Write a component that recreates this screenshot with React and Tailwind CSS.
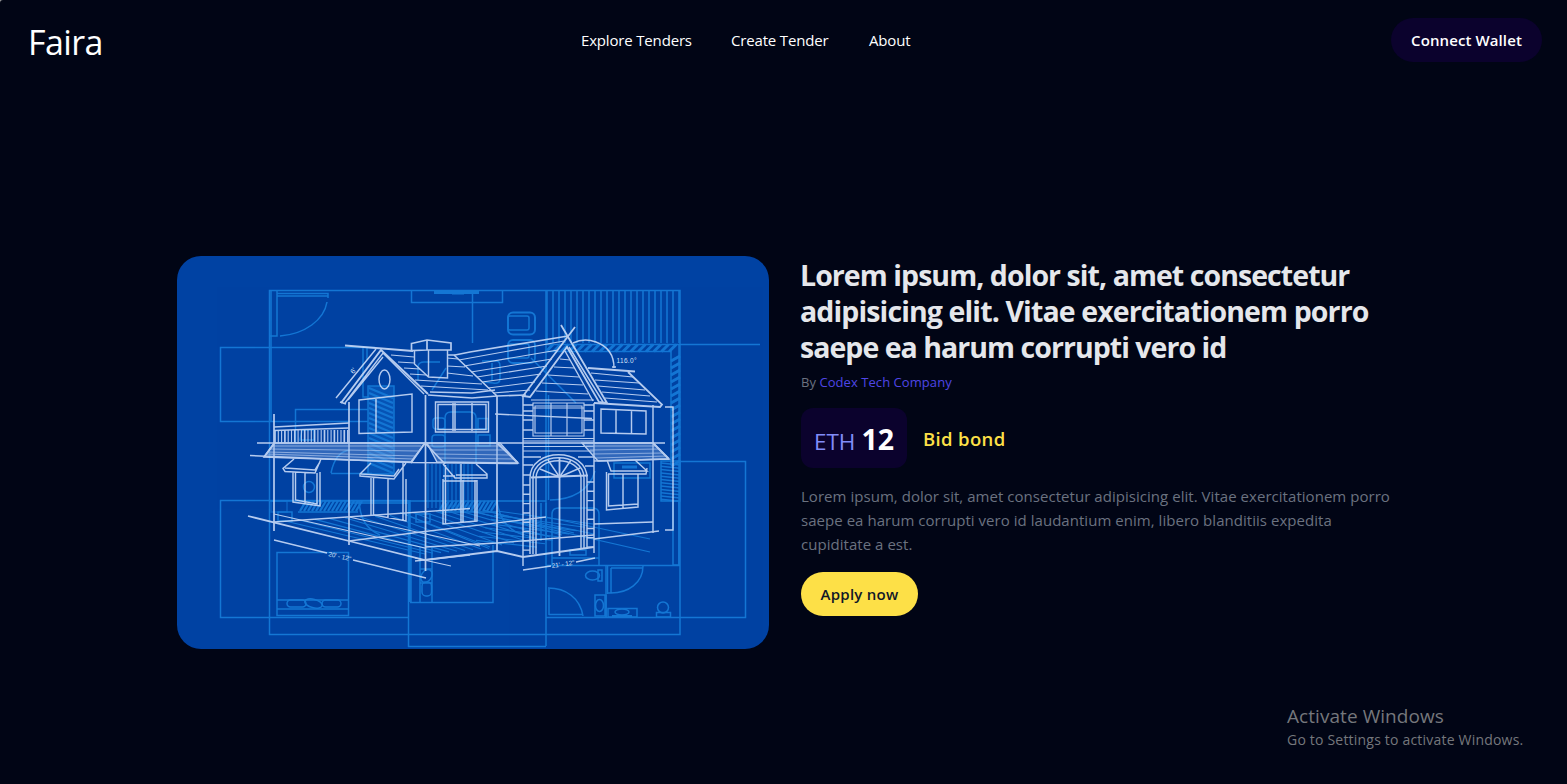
const range = (n) => Array.from({ length: n }, (_, i) => i);

const NAV = [
  { label: 'Explore Tenders', width: 'w-[110px]' },
  { label: 'Create Tender', width: 'w-[98px]' },
  { label: 'About', width: 'w-[44px]' },
];

function FloorPlan() {
  return (
    <g stroke="#1e90ec" strokeWidth="1.5" opacity="0.68">
      {/* outer walls */}
      <path d="M269.5 634.5V290.5H680V634.5Z" />
      <path d="M271 290V421M679 344V565" />
      <path d="M368 421.500H220.500V347.500H375" />
      <path d="M408 500.500H220.500V617.500H408" />
      <path d="M680 461.500H745.500V617.500H546M680 344.500H760" />
      <path d="M408.500 500V646.500H546M546 290V646M410 500V602M548.500 395V500" />
      <path d="M472.500 290V343M411.500 290.500V302.500H502.500V290.500" />
      <path d="M434 292.500H479" strokeWidth="3" />
      <path d="M452 292.500H464" strokeWidth="4" />
      {/* upper left door */}
      <path d="M277 290V336H270M277 293.500H328V298M277 296H328M327 302C324 320 305 334 280 336" />
      <path d="M368 409.500H295.500V443M302 430H314V440H300ZM363 347V397H368M367 347V360" />
      {/* chairs */}
      <rect x="508" y="312.500" width="27" height="22" rx="5" strokeWidth="2" />
      <rect x="508" y="316" width="21" height="14" rx="2" />
      <rect x="508" y="340" width="27" height="23" rx="5" strokeWidth="1.800" />
      <rect x="508" y="344" width="21" height="14" rx="2" />
      <path d="M482 361H496Q500 361 500 366V379Q500 384 493 383L484 382M492 363V381M418 380V366Q419 362 424 362H440M432 390L446 368M531 358L576 403" />
      <rect x="433" y="418" width="12" height="11" rx="3" />
      <rect x="432" y="435" width="13" height="12" rx="3" />
      <path d="M445 463V418Q445 412 451 412H470Q476 412 476 418V463M478 418.500H488V429H478ZM478 435H490V446H478Z" />
      {/* planks */}
      {range(23).map((i) => (
        <path key={i} d={`M${547 + i * 6} 291V343`} />
      ))}
      <path d="M546 344.500H680M546 351.500H671V465" />
      {range(17).map((i) => (
        <path key={i} d={`M${546 + i * 7.7} 351.500l7 -7`} strokeWidth="3" />
      ))}
      {range(16).map((i) => (
        <path key={i} d={`M671 ${361 + i * 7}l9 -5`} strokeWidth="3" />
      ))}
      <rect x="661" y="461" width="19" height="40" />
      {range(12).map((i) => (
        <path key={i} d={`M661 ${463 + i * 3.3}l19 2`} />
      ))}
      <rect x="673" y="501" width="6" height="64" />
      {/* hatched shaft */}
      <rect x="368" y="386" width="26" height="88" fill="#1272d2" fillOpacity=".6" />
      {range(16).map((i) => (
        <path key={i} d={`M369 ${388 + i * 5}l24 10`} strokeWidth="2" />
      ))}
      <path d="M331 473C334 458 340 451 350 450M331 473.500H372" />
      {/* hatched sills */}
      <path d="M270 501H546M298 512H358M349 503H409M440 512H497" />
      {range(15).map((i) => (
        <path key={i} d={`M${300 + i * 4} 511l6 -10`} strokeWidth="2.200" />
      ))}
      {range(14).map((i) => (
        <path key={i} d={`M${439 + i * 4} 511l6 -10`} strokeWidth="2.200" />
      ))}
      {range(12).map((i) => (
        <path key={i} d={`M${428 + i * 4} 464V508`} strokeWidth="1.100" />
      ))}
      <path d="M359 500C360 520 367 529 380 535M497 500C499 520 510 531 524 535M278 512H292V521H278ZM416 514H430V522H416Z" />
      <rect x="271" y="501" width="16" height="11" opacity=".6" />
      {/* deck boards */}
      <g strokeWidth="1.100">
        {range(9).map((i) => (
          <path key={i} d={`M${285 + i * 15} ${521 - i * 0.8}L${425 + i * 8} ${554 - i * 0.7}`} />
        ))}
        {range(8).map((i) => (
          <path key={i} d={`M${400 + i * 12} ${512.5 - i * 0.3}L${490 + i * 12} ${547 - i * 2}`} />
        ))}
        {range(8).map((i) => (
          <path key={i} d={`M${497 - i * 3} ${511 + i * 4.2}L${593 - i * 8} ${524 + i * 3.3}`} />
        ))}
        <path d="M470 511L650 552M546 517L650 539M497 514L594 534" />
      </g>
      {/* bed */}
      <rect x="277" y="552.500" width="71.500" height="63" />
      <path d="M277 600H348M277 609H348" />
      <rect x="287" y="600" width="19" height="7" rx="3.500" />
      <rect x="322" y="600" width="19" height="7" rx="3.500" />
      <ellipse cx="313.500" cy="603.500" rx="9" ry="4.200" transform="rotate(14 313.500 603.500)" />
      {/* center lower room */}
      <path d="M410 602.500H493V545M411 545V602M420 547V602M432 547V602M420 569H432M420 583H432" />
      <ellipse cx="426.500" cy="576" rx="5" ry="7" transform="rotate(35 426.500 576)" />
      <rect x="422" y="582" width="9.500" height="14" rx="4" />
      {/* bath and entry */}
      <path d="M546 565.500H680M606 566V617M546 503V541M541 503V541" />
      <path d="M607.500 566V594M611 568V593H607M643 566C643 583 628 593 611 593M611 568H643" />
      <path d="M548 588C566 588 580 598 583 616M549 588V615M549 614.500H583M606 595V617" />
      <ellipse cx="592.500" cy="575.500" rx="7" ry="4.500" />
      <rect x="598" y="570" width="4" height="11" />
      <rect x="595" y="595" width="10" height="21" />
      <ellipse cx="599.500" cy="605.500" rx="4" ry="6" />
      <rect x="608" y="608.500" width="29" height="8.500" />
      <ellipse cx="622" cy="612" rx="7" ry="3" />
      <path d="M612 616H632" strokeWidth="2" />
      <circle cx="663" cy="607.500" r="5.500" />
      <rect x="656.500" y="612.500" width="14" height="4.500" />
      <path d="M552 565V514Q552 508 559 508H592Q599 508 599 514V565M552 558H599M570 550H586V555H570Z" />
      <path d="M595 471C590 490 572 500 550 500M614 463H650V478H614Z" />
      <path d="M622 467H637" strokeWidth="3" />
      <circle cx="309" cy="487" r="5.500" />
    </g>
  );
}

function House() {
  return (
    <g stroke="#cfdffa" strokeWidth="1.450" opacity="0.88">
      {/* left gable */}
      <path d="M345 345.500L413 351" strokeWidth="1.800" />
      <path d="M341 403L381 350L428 394" strokeWidth="2" />
      <path d="M345 403L383 353L424 394M336 398L376 349M348 400L383 357M340 402L346 404" />
      <ellipse cx="384.500" cy="379.500" rx="5.500" ry="9.500" />
      <path d="M359 400L412 394V432L359 433.500ZM376 398V433" />
      {/* chimney */}
      <path d="M411.500 343.500L427 340L451 343V350L427 350L411.500 350.500ZM427 340V350" strokeWidth="1.700" />
      <path d="M414.500 351V364L428.500 377L447.500 378V350M428.500 350V377" />
      {/* main roof */}
      <path d="M447 355L455 355L470 352L568 336" strokeWidth="1.700" />
      <path d="M454 355L497 396M428 395L472 398L497 396L526 395M430 392L472 393L495 390" strokeWidth="1.600" />
      <g strokeWidth="1.100">
        <path d="M391 355L414 357M398 362L415 363M404 368L420 369M410 374L426 375M415 380L482 384M421 386L488 390M447 358L458 359M447 366L465 367M447 373L473 376" />
        <path d="M459 360L564 341M464 366L558 350M471 372L552 359M477 377L547 366M482 382L541 374M488 388L535 382M493 393L530 390" />
      </g>
      {/* front gable */}
      <path d="M575 327L523 396L530 397L567 347L599 402L607 403L561 325" strokeWidth="1.800" />
      <path d="M565 351L593 401M569 347L603 402" />
      <g strokeWidth="1.100">
        <path d="M560 359L570 360M554 367L575 368M548 375L579 377M542 383L583 385M536 391L588 394" />
      </g>
      <path d="M573 343C581 339 588 339 596 342C607 346 614 355 614 368M612 367H616" />
      {/* right roof */}
      <path d="M588 368L635 371.500M628 372L662 404.500L660 407L594 403" strokeWidth="1.800" />
      <path d="M591 373L633 377M595 380L639 383M598 386L645 390M602 392L650 396M605 398L657 402" strokeWidth="1.100" />
      {/* walls */}
      <path d="M349 402V545M425.500 395V571M497 396V552M274 414V531" strokeWidth="1.700" />
      <path d="M523 396V566M594 403V553M653 405V533M665 407H673V530H665" />
      {/* upper windows */}
      <path d="M435.500 402H488.500V432H435.500ZM438 404.500H486V429.500H438ZM453 403V431M455 403V431M472 403V431" />
      <path d="M533 403H584V436H533ZM535 406H582V433H535ZM551 403V436M567 403V436M533 408H584M531 400H594" strokeWidth="1.150" />
      <path d="M601 409L646 411V434L601 433ZM616 410V434M631.500 410V434" />
      <path d="M495 414L592 418.500" />
      {[405, 411, 420, 430].map((y) => (
        <path key={y} d={`M523 ${y}H533M584 ${y}H594`} />
      ))}
      <path d="M523 438.500H594M523 441H594M523 446.500H594M523 451H594" strokeWidth="1" />
      {/* balcony */}
      <path d="M274 427L349 423M274 430.500L349 428" />
      {range(23).map((i) => (
        <path key={i} d={`M${275 + i * 3.3} 430V443`} strokeWidth={i % 3 ? '1.100' : '1.700'} />
      ))}
      {/* porch roofs */}
      <g fill="#86aee8" fillOpacity=".42">
        <path d="M274 443H425L411 462L264 457Z" />
        <path d="M427 443H500L518 463L437 462Z" />
        <path d="M582 443H653L669 459L598 461Z" />
      </g>
      <path d="M257 443H665M250 455.500L411 462.500L518 463.500M594 461L669 459" />
      <path d="M274 444L264 457M425 443L411 463M425 443L445 464M497 443L518 463M653 443L669 459" strokeWidth="1.800" />
      <g strokeWidth=".9" opacity=".75">
        <path d="M272 446H421M270 449L418 451M268 452L416 456M266 454L413 459" />
        <path d="M429 446H501M432 450H505M435 454L509 455M438 458L514 459" />
        <path d="M586 446H656M590 450L660 449M593 454L664 453M596 458L667 456" />
      </g>
      {/* lower left window */}
      <path d="M294 459L283 468.500L285 471.500L315 473L321 459M285 468L315 470L320 462M293 472V502L320 506V472M295.500 472V500L317 504V473M305 472V503" />
      {/* lower center windows */}
      <path d="M371 463L360 474V476L394 479L406 463M361 474L394 476L399 469M371 478V515M373.500 478V515L406 521V479M388 479V519M403 463V521" />
      <path d="M443 464L455 478H487L487 474L476 464M456 475H487M443 479V524L477 521V480M445.500 465V523M461 464V522M463 480V522M475 480V521M443 476H455M443 481H477" />
      {/* lower right window */}
      <path d="M607 460L611 471L647 471L635 460M608 474L646 474L647 468M606.500 472V510L638 507V474M608.500 474V506L638 504M623 474V508" />
      {/* arched door */}
      <path d="M530 554V478C530 447 587 447 587 478V549M533 554V478C533 451 584 451 584 478V549M536 554V478C536 455 581 455 581 478V549" />
      <path d="M531 477.500L588 475.500M559.500 457V556" strokeWidth="1.800" />
      <path d="M559.500 477L540 469M559.500 477L548 460M559.500 477L571 460M559.500 477L580 468" />
      {range(8).map((i) => (
        <path key={i} d={`M523 ${485 + i * 9.3}H530M587 ${482 + i * 9.3}H594`} />
      ))}
      <path d="M523 457H541M523 465H533M523 475H530M578 457H594M585 466H594" />
      {/* deck and ground */}
      <path d="M248 516L349 541L425 560L497 551L523 557L594 547" strokeWidth="1.800" />
      <path d="M594 539L659 531M594 524L653 522M274 522L470 508.500M349 541L425 531.500L546 517M415 561L470 555M425 547L497 543L594 535" strokeWidth="1.300" />
      <path d="M274 514L425 548M349 517L480 546M415 558L451 566" strokeWidth="1.100" />
      {/* dimensions */}
      <path d="M274 540L327 553M353 560L426 578M523 570L551 566M576 562L595 558" strokeWidth="1.300" />
    </g>
  );
}

function Blueprint() {
  return (
    <svg
      viewBox="177 256 592 393"
      fill="none"
      role="img"
      aria-label="House blueprint"
      className="block h-[393px] w-[592px] rounded-[24px] bg-[#0042a3]"
    >
      <FloorPlan />
      <House />
      <g fill="#d2e0f8" fontFamily="Liberation Sans, sans-serif" fontSize="6.500">
        <text x="616.500" y="362.500" textLength="20">116.0°</text>
        <text x="350" y="373" fontSize="7" transform="rotate(-55 353 370)">6'</text>
        <text x="328" y="556" textLength="23" transform="rotate(13 328 556)">20' - 12"</text>
        <text x="552" y="568" textLength="23" transform="rotate(-8 552 568)">21' - 12"</text>
      </g>
    </svg>
  );
}

function Header() {
  return (
    <header className="flex h-20 items-center justify-between pl-[28px] pr-[25px]">
      <a href="#" className="w-[151px] pt-1 text-[34px] leading-10 tracking-[-0.6px]">Faira</a>
      <nav className="flex gap-10 pr-[76px] text-[15px] leading-6 tracking-[-0.17px]">
        {NAV.map((item) => (
          <a key={item.label} href="#" className={`${item.width} whitespace-nowrap`}>{item.label}</a>
        ))}
      </nav>
      <button className="h-11 w-[151px] whitespace-nowrap rounded-full bg-[#0b022d] text-[15px] font-semibold tracking-[0.1px]">
        Connect Wallet
      </button>
    </header>
  );
}

export default function App() {
  return (
    <div className="bg-[#a0a0a0]">
      <div className="flex h-[784px] flex-col overflow-hidden rounded-tl-[3px] bg-[#010515] font-['Open_Sans','Noto_Sans',sans-serif] text-white">
        <Header />
        <main className="flex gap-8 pl-[177px] pt-44">
          <Blueprint />
          <section className="w-[592px] whitespace-nowrap pt-px">
            <h1 className="-ml-px text-[28.500px] font-bold leading-9 text-[#e5e7eb]">
              <span className="block tracking-[-0.94px]">Lorem ipsum, dolor sit, amet consectetur</span>
              <span className="block tracking-[-0.88px]">adipisicing elit. Vitae exercitationem porro</span>
              <span className="block tracking-[-0.96px]">saepe ea harum corrupti vero id</span>
            </h1>
            <p className="mt-[7px] text-[13px] leading-5 tracking-[0.06px] text-[#6b7280]">
              By <a href="#" className="text-[#4f46e5]">Codex Tech Company</a>
            </p>
            <div className="mt-4 flex items-center gap-4">
              <div className="flex h-[60px] w-[106px] items-baseline justify-center gap-1.5 rounded-xl bg-[#0b022d] pt-[13px]">
                <span className="text-[22.500px] font-medium leading-9 text-[#818cf8]">ETH</span>
                <span className="text-[28.500px] font-bold leading-9">12</span>
              </div>
              <span className="pt-px text-[18.500px] font-semibold leading-7 tracking-[0.35px] text-[#fde047]">Bid bond</span>
            </div>
            <p className="mt-4 text-[15px] leading-6 tracking-[0.04px] text-[#6b7280]">
              Lorem ipsum, dolor sit, amet consectetur adipisicing elit. Vitae exercitationem porro
              <br />
              saepe ea harum corrupti vero id laudantium enim, libero blanditiis expedita
              <br />
              cupiditate a est.
            </p>
            <button className="mt-4 h-11 w-[117px] rounded-full bg-[#fde047] text-[15px] font-semibold tracking-[0.25px] text-[#111827]">
              Apply now
            </button>
          </section>
        </main>
        <aside className="ml-[1287px] mt-[54px] whitespace-nowrap text-[#75777c]">
          <p className="text-[19px] leading-[27px] tracking-[0.06px]">Activate Windows</p>
          <p className="text-sm leading-[19px] tracking-[0.2px]">Go to Settings to activate Windows.</p>
        </aside>
      </div>
    </div>
  );
}
